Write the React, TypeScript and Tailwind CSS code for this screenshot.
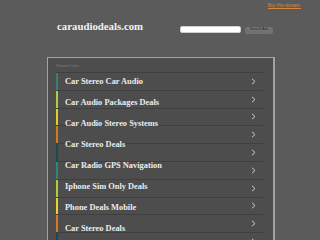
import React from "react";

const rows = [
  { label: "Car Stereo Car Audio", color: "#2a8a68" },
  { label: "Car Audio Packages Deals", color: "#b4cc3c" },
  { label: "Car Audio Stereo Systems", color: "#e6cf22" },
  { label: "Car Stereo Deals", color: "#d67a22" },
  { label: "Car Radio GPS Navigation", color: "#1d4756" },
  { label: "Iphone Sim Only Deals", color: "#2a8a78" },
  { label: "Phone Deals Mobile", color: "#b4cc3c" },
  { label: "Car Stereo Deals", color: "#e6d426" },
  { label: "", color: "#d67a26" },
  { label: "", color: "#1d4756" },
];

function Chevron() {
  return (
    <svg width="5" height="7" viewBox="0 0 5 7" className="block">
      <path d="M1 0.8 L4 3.5 L1 6.2" fill="none" stroke="#d8d8d8" strokeWidth="0.9" />
    </svg>
  );
}

export default function App() {
  return (
    <div className="w-[320px] h-[240px] overflow-hidden bg-[#5b5b5b] flex flex-col" style={{ fontFamily: '"Liberation Serif", serif' }}>
      <div className="shrink-0 flex justify-end pr-[19px] pt-[3px] h-[10px]">
        <span className="text-[4.5px] leading-[6px] text-[#d9853f] underline" style={{ fontFamily: '"Liberation Sans", sans-serif' }}>
          Buy this domain.
        </span>
      </div>
      <div className="shrink-0 flex items-start h-[47px] pl-[57px]">
        <div className="pt-[10px] text-[10.8px] leading-[12px] font-bold text-[#f2f2f2]">caraudiodeals.com</div>
        <div className="ml-[37px] mt-[16px] w-[61px] h-[7px] bg-white rounded-[2px] border border-[#cfcfcf]"></div>
        <div className="ml-[4px] mt-[16.5px] w-[28px] h-[7px] bg-[#727272] rounded-[2px] flex items-center justify-center text-[3.6px] text-[#2f2f2f]" style={{ fontFamily: '"Liberation Sans", sans-serif' }}>
          Search Ads
        </div>
      </div>
      <div className="shrink-0 ml-[47px] w-[228px] h-[200px] border-l border-t border-r-2 border-[#a3a3a3] bg-[#4d4d4d] pl-[8px] pr-[10px]">
        <div className="h-[13px] pt-[6px] text-[3.8px] leading-[4px] text-[#7c7c7c]" style={{ fontFamily: '"Liberation Sans", sans-serif' }}>
          Related Links
        </div>
        <div className="grid">
          <div className="col-start-1 row-start-1 flex flex-col pt-[1px]">
            {rows.map((r, i) => (
              <div key={i} className="h-[17.8px] shrink-0 flex border-t border-[#3f3f3f]">
                <div className="w-[2px] h-full" style={{ backgroundColor: r.color }} />
                <div className="flex-1 flex items-center justify-end pr-[7px]">
                  <Chevron />
                </div>
              </div>
            ))}
          </div>
          <div className="col-start-1 row-start-1 flex flex-col pl-[9px]">
            {rows.filter((r) => r.label).map((r, i) => (
              <div key={i} className="h-[21px] leading-[21px] text-[8.4px] font-bold text-[#ececec] whitespace-nowrap">
                {r.label}
              </div>
            ))}
          </div>
        </div>
      </div>
    </div>
  );
}
